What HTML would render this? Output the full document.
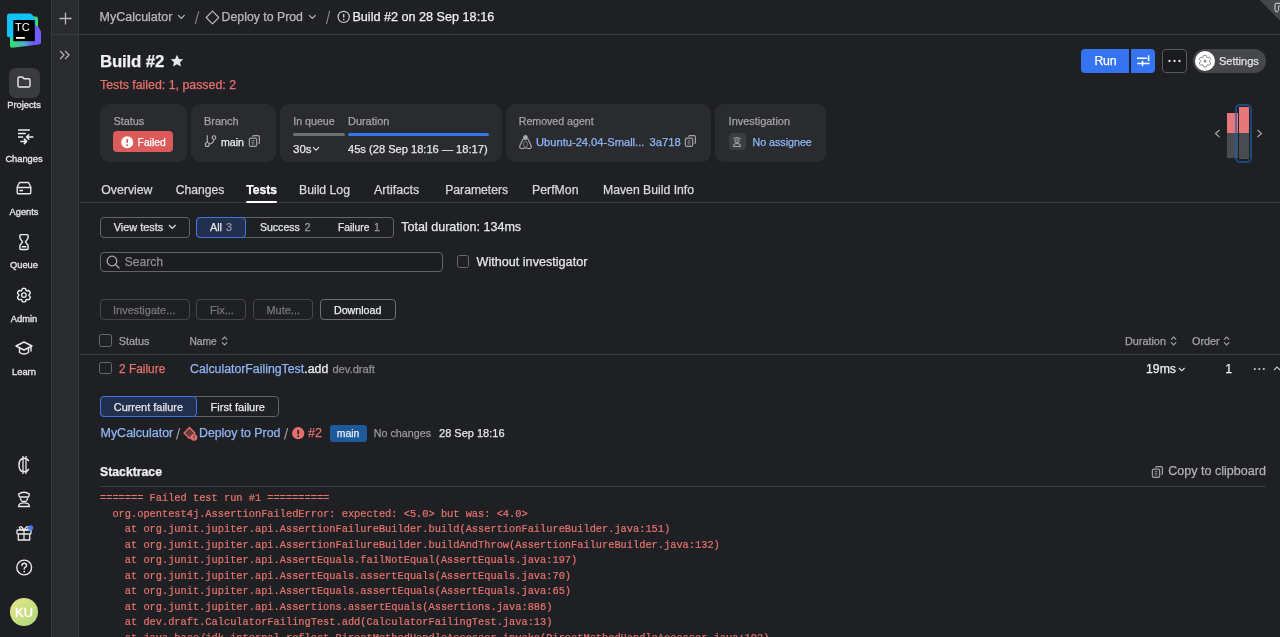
<!DOCTYPE html>
<html><head><meta charset="utf-8">
<style>
*{box-sizing:border-box;margin:0;padding:0}
html,body{width:1280px;height:637px;overflow:hidden;background:#1f2023;font-family:"Liberation Sans",sans-serif;color:#dfe1e5;position:relative}
.a{position:absolute;white-space:nowrap;line-height:1;-webkit-text-stroke:0.25px currentColor}
#root{position:absolute;left:0;top:0;width:1280px;height:637px;will-change:transform}
svg{position:absolute;overflow:visible}
.mono{font-family:"Liberation Mono",monospace;font-size:10.33px;color:#e8736e;line-height:15.5px;white-space:pre;-webkit-text-stroke:0.2px currentColor}
</style></head><body><div id="root">
<div style="position:absolute;left:0px;top:0px;width:51px;height:637px;background:#1e1f22;"></div>
<div style="position:absolute;left:51px;top:0px;width:1px;height:637px;background:#393a3e;"></div>
<div style="position:absolute;left:52px;top:0px;width:26px;height:637px;background:#2a2b2f;"></div>
<div style="position:absolute;left:78px;top:0px;width:1px;height:637px;background:#393a3e;"></div>
<div style="position:absolute;left:52px;top:34px;width:1228px;height:1px;background:#393a3e;"></div>
<svg style="left:4px;top:10px;" width="40" height="40" viewBox="0 0 40 40" fill="none">
<defs><linearGradient id="lg1" x1="6" y1="30" x2="37" y2="30" gradientUnits="userSpaceOnUse"><stop offset="0" stop-color="#2fe06a"/><stop offset="0.45" stop-color="#4bb2c9"/><stop offset="0.75" stop-color="#6a5cf5"/><stop offset="1" stop-color="#7b5cff"/></linearGradient></defs>
<path d="M6 27 L6 36 Q6 38 8.5 37.8 L35 34.6 Q37 34.3 37 32.3 L37 22 L33 14 Z" fill="url(#lg1)"/>
<path d="M26 6.5 L32 6.5 Q34 6.5 34 8.5 L34 16 L30 17 Z" fill="#3fdc63"/>
<path d="M30 13 L37 22 L37 33 L28 34 Z" fill="#6e5cfa"/>
<path d="M3 6 Q3 3.5 5.5 3.5 L26 3.5 Q27 3.5 28 4.5 L33 11 L20 26 L9 28.5 L3 26.5 Z" fill="#14c3f5"/>
<rect x="9.3" y="10" width="21.5" height="21.2" fill="#000"/>
<text x="11" y="20.8" font-family="Liberation Sans" font-size="11" fill="#fff">TC</text>
<rect x="12" y="27" width="8.8" height="1.8" fill="#fff"/>
</svg>
<div style="position:absolute;left:9px;top:67.5px;width:30.5px;height:30.5px;background:#3a3b3f;border-radius:7px;"></div>
<svg style="left:16px;top:74px;" width="16" height="16" viewBox="0 0 16 16" fill="none"><path d="M2 4.5 Q2 3 3.5 3 L6.5 3 L8 4.8 L12.5 4.8 Q14 4.8 14 6.3 L14 11.5 Q14 13 12.5 13 L3.5 13 Q2 13 2 11.5 Z" stroke="#e8e9ec" stroke-width="1.4" stroke-linejoin="round"/></svg>
<div class="a" style="left:0px;top:101.40px;font-size:9.3px;color:#e2e3e7;width:48px;text-align:center;-webkit-text-stroke:0.35px currentColor;">Projects</div>
<svg style="left:16px;top:128px;" width="18" height="17" viewBox="0 0 18 17" fill="none"><path d="M2 1.9 H13.9 M2 5.6 H9.8 M2 9 H7.1" stroke="#eceef1" stroke-width="1.5"/><path d="M16.8 9 H10.5 M12.8 6.7 L10.5 9 L12.8 11.3 M4.9 13.4 H10.6 M8.3 11.1 L10.6 13.4 L8.3 15.7" stroke="#eceef1" stroke-width="1.5" stroke-linecap="round" stroke-linejoin="round"/></svg>
<div class="a" style="left:0px;top:155.00px;font-size:9.3px;color:#e2e3e7;width:48px;text-align:center;-webkit-text-stroke:0.35px currentColor;">Changes</div>
<svg style="left:16px;top:181.4px;" width="16" height="14" viewBox="0 0 16 14" fill="none"><path d="M1.2 6 L3.5 1.5 H12.5 L14.8 6 V11.5 Q14.8 12.8 13.5 12.8 H2.5 Q1.2 12.8 1.2 11.5 Z M1.2 6.5 H14.8" stroke="#e8e9ec" stroke-width="1.4" stroke-linejoin="round"/><path d="M3.5 9.5 H7" stroke="#e8e9ec" stroke-width="1.6"/></svg>
<div class="a" style="left:0px;top:207.60px;font-size:9.3px;color:#e2e3e7;width:48px;text-align:center;-webkit-text-stroke:0.35px currentColor;">Agents</div>
<svg style="left:18px;top:233px;" width="12" height="18" viewBox="0 0 12 18" fill="none"><path d="M3 1.6 H9 Q10.1 1.6 10.1 2.7 V4.5 Q10.1 5.5 9.3 6.3 L7.4 8.8 L9.3 11.3 Q10.1 12.1 10.1 13.1 V15.4 Q10.1 16.5 9 16.5 H3 Q1.9 16.5 1.9 15.4 V13.1 Q1.9 12.1 2.7 11.3 L4.6 8.8 L2.7 6.3 Q1.9 5.5 1.9 4.5 V2.7 Q1.9 1.6 3 1.6 Z" stroke="#eceef1" stroke-width="1.4" stroke-linejoin="round"/><path d="M4.2 13.7 H7.8" stroke="#eceef1" stroke-width="1.4" stroke-linecap="round"/></svg>
<div class="a" style="left:0px;top:261.00px;font-size:9.3px;color:#e2e3e7;width:48px;text-align:center;-webkit-text-stroke:0.35px currentColor;">Queue</div>
<svg style="left:14px;top:285px;" width="20" height="20" viewBox="0 0 20 20" fill="none"><path d="M8.39 3.57 Q9.90 3.00 11.41 3.57 L12.35 5.86 L14.80 5.53 Q16.05 6.55 16.31 8.14 L14.80 10.10 L16.31 12.06 Q16.05 13.65 14.80 14.67 L12.35 14.34 L11.41 16.63 Q9.90 17.20 8.39 16.63 L7.45 14.34 L5.00 14.67 Q3.75 13.65 3.49 12.06 L5.00 10.10 L3.49 8.14 Q3.75 6.55 5.00 5.53 L7.45 5.86 Z" stroke="#eceef1" stroke-width="1.4" stroke-linejoin="round"/><circle cx="9.9" cy="10.1" r="2.3" stroke="#eceef1" stroke-width="1.3"/></svg>
<div class="a" style="left:0px;top:314.60px;font-size:9.3px;color:#e2e3e7;width:48px;text-align:center;-webkit-text-stroke:0.35px currentColor;">Admin</div>
<svg style="left:15px;top:340px;" width="18" height="16" viewBox="0 0 18 16" fill="none"><path d="M9 2 L17 6 L9 10 L1 6 Z" stroke="#e8e9ec" stroke-width="1.4" stroke-linejoin="round"/><path d="M4.5 8 V12.5 Q9 15.5 13.5 12.5 V8 M16 6.5 V11" stroke="#e8e9ec" stroke-width="1.4" stroke-linecap="round"/></svg>
<div class="a" style="left:0px;top:367.80px;font-size:9.3px;color:#e2e3e7;width:48px;text-align:center;-webkit-text-stroke:0.35px currentColor;">Learn</div>
<svg style="left:16px;top:455px;" width="16" height="20" viewBox="0 0 16 20" fill="none"><path d="M12.5 5.5 Q11 3.2 8.2 3.2 Q3 3.2 3 10 Q3 16.8 8.2 16.8 Q11 16.8 12.5 14.5" stroke="#e8e9ec" stroke-width="1.5" stroke-linecap="round"/><path d="M7 1 V19 M10 1 V19" stroke="#e8e9ec" stroke-width="1.3"/></svg>
<svg style="left:16px;top:490px;" width="16" height="18" viewBox="0 0 16 18" fill="none"><path d="M2.5 4 Q8 0.5 13.5 4 L12.5 7 H3.5 Z" stroke="#e8e9ec" stroke-width="1.3" stroke-linejoin="round"/><path d="M4.5 8 Q4.5 11.5 8 11.5 Q11.5 11.5 11.5 8" stroke="#e8e9ec" stroke-width="1.3"/><path d="M2.5 16.5 Q2.5 12.8 8 12.8 Q13.5 12.8 13.5 16.5 Z" stroke="#e8e9ec" stroke-width="1.3" stroke-linejoin="round"/></svg>
<svg style="left:16px;top:524px;" width="17" height="18" viewBox="0 0 17 18" fill="none"><rect x="1" y="6" width="14" height="4" rx="0.8" stroke="#e8e9ec" stroke-width="1.3"/><path d="M2.3 10 V16 H13.7 V10 M8 6 V16 M8 6 Q5 1 3.5 3.5 Q3 5.5 8 6 Q11 1 12.5 3.5 Q13 5.5 8 6" stroke="#e8e9ec" stroke-width="1.3" stroke-linejoin="round"/><circle cx="14.6" cy="3.8" r="2.6" fill="#3d7bf7"/></svg>
<svg style="left:16px;top:559px;" width="17" height="17" viewBox="0 0 17 17" fill="none"><circle cx="8.2" cy="8.5" r="7.4" stroke="#e8e9ec" stroke-width="1.4"/><path d="M5.9 6.6 Q5.9 4.3 8.2 4.3 Q10.5 4.3 10.5 6.4 Q10.5 7.8 8.9 8.5 Q8.2 8.9 8.2 10" stroke="#e8e9ec" stroke-width="1.4" stroke-linecap="round"/><circle cx="8.2" cy="12.6" r="0.9" fill="#e8e9ec"/></svg>
<div style="position:absolute;left:10px;top:598px;width:28px;height:28px;background:linear-gradient(135deg, #ece38e 0%, #c9df80 50%, #a9d87a 100%);border-radius:50%;"></div>
<div class="a" style="left:10px;top:606.80px;font-size:12.8px;color:#ffffff;width:28px;text-align:center;-webkit-text-stroke:0.45px #fff;">KU</div>
<svg style="left:59px;top:11.8px;" width="13" height="13" viewBox="0 0 13 13" fill="none"><path d="M6.5 0.5 V12.5 M0.5 6.5 H12.5" stroke="#b9babe" stroke-width="1.3"/></svg>
<svg style="left:59px;top:50px;" width="12" height="10" viewBox="0 0 12 10" fill="none"><path d="M1 0.8 L5 5 L1 9.2 M6 0.8 L10 5 L6 9.2" stroke="#b9babe" stroke-width="1.2" stroke-linejoin="round"/></svg>
<div class="a" style="left:99.6px;top:10.70px;font-size:12.48px;color:#b8b9bd;">MyCalculator</div>
<svg style="left:177px;top:14px;" width="9" height="6" viewBox="0 0 9 6" fill="none"><path d="M1 1.2 L4.3 4.5 L7.6 1.2" stroke="#b8b9bd" stroke-width="1.2"/></svg>
<svg style="left:194px;top:10px;" width="6" height="15" viewBox="0 0 6 15" fill="none"><path d="M4.6 1.8 L1.4 13.4" stroke="#8a8b8f" stroke-width="1.1" stroke-linecap="round"/></svg>
<svg style="left:205px;top:10px;" width="15" height="15" viewBox="0 0 15 15" fill="none"><path d="M7.5 1.2 L13.8 7.5 L7.5 13.8 L1.2 7.5 Z" stroke="#b8b9bd" stroke-width="1.2" stroke-linejoin="round"/></svg>
<div class="a" style="left:221.6px;top:10.70px;font-size:12.31px;color:#b8b9bd;">Deploy to Prod</div>
<svg style="left:308px;top:14px;" width="9" height="6" viewBox="0 0 9 6" fill="none"><path d="M1 1.2 L4.3 4.5 L7.6 1.2" stroke="#b8b9bd" stroke-width="1.2"/></svg>
<svg style="left:325px;top:10px;" width="6" height="15" viewBox="0 0 6 15" fill="none"><path d="M4.6 1.2 L1.5 13.6" stroke="#8a8b8f" stroke-width="1.1" stroke-linecap="round"/></svg>
<svg style="left:337px;top:10px;" width="14" height="14" viewBox="0 0 14 14" fill="none"><circle cx="6.7" cy="6.9" r="5.6" stroke="#c9cace" stroke-width="1.2"/><path d="M6.7 3.9 V7.6" stroke="#c9cace" stroke-width="1.4"/><circle cx="6.7" cy="9.6" r="0.8" fill="#c9cace"/></svg>
<div class="a" style="left:352.4px;top:10.80px;font-size:12.63px;color:#eeeff2;">Build #2 on 28 Sep 18:16</div>
<svg style="left:1259px;top:0px;" width="21" height="21" viewBox="0 0 21 21" fill="none"><path d="M0.8 0 H21 V20.6 Z" fill="#46474b"/><path d="M21 3.4 H17.8 Q16 3.4 16 5.2 V9.8 Q16 11.6 17.8 11.6 H19" stroke="#bfc0c4" stroke-width="1.2"/><path d="M19.2 6 H21 M19.5 6 V11" stroke="#bfc0c4" stroke-width="1"/></svg>
<div class="a" style="left:100px;top:54.00px;font-size:16.8px;color:#f0f1f4;font-weight:bold;letter-spacing:-0.15px;">Build #2</div>
<svg style="left:170px;top:54px;" width="14" height="13" viewBox="0 0 14 13" fill="none"><path d="M7 0.8 L8.9 4.9 L13.3 5.3 L10 8.3 L11 12.6 L7 10.3 L3 12.6 L4 8.3 L0.7 5.3 L5.1 4.9 Z" fill="#e6e7ea"/></svg>
<div class="a" style="left:100px;top:79.00px;font-size:12.36px;color:#e4716d;">Tests failed: 1, passed: 2</div>
<div style="position:absolute;left:1081px;top:49px;width:48px;height:24px;background:#3574f0;border-radius:4px 0 0 4px;"></div>
<div style="position:absolute;left:1131px;top:49px;width:24px;height:24px;background:#3574f0;border-radius:0 4px 4px 0;"></div>
<div class="a" style="left:1094.4px;top:54.90px;font-size:12.3px;color:#ffffff;letter-spacing:-0.2px;">Run</div>
<svg style="left:1135px;top:53px;" width="16" height="16" viewBox="0 0 16 16" fill="none"><path d="M2 5.2 H11.8 M2.2 10.4 H14.6" stroke="#fff" stroke-width="1.5"/><path d="M13.6 3 V7.4 M7.5 8.2 V12.6" stroke="#fff" stroke-width="1.6" stroke-linecap="round"/></svg>
<div style="position:absolute;left:1162px;top:49px;width:25px;height:24px;background:#1a1b1e;border:1px solid #5a5b60;border-radius:4px;"></div>
<svg style="left:1167px;top:59px;" width="15" height="4" viewBox="0 0 15 4" fill="none"><circle cx="2.5" cy="2" r="1.15" fill="#e8e9ec"/><circle cx="7.5" cy="2" r="1.15" fill="#e8e9ec"/><circle cx="12.5" cy="2" r="1.15" fill="#e8e9ec"/></svg>
<div style="position:absolute;left:1193px;top:49px;width:73px;height:24px;background:#46474c;border-radius:12px;"></div>
<div style="position:absolute;left:1195px;top:51px;width:20px;height:20px;background:#ffffff;border-radius:50%;"></div>
<svg style="left:1195px;top:50.5px;" width="20" height="20" viewBox="0 0 20 20" fill="none"><path d="M8.67 4.45 Q10.00 3.95 11.33 4.45 L12.10 6.56 L14.31 6.18 Q15.42 7.07 15.64 8.48 L14.20 10.20 L15.64 11.92 Q15.42 13.33 14.31 14.22 L12.10 13.84 L11.33 15.95 Q10.00 16.45 8.67 15.95 L7.90 13.84 L5.69 14.22 Q4.58 13.33 4.36 11.92 L5.80 10.20 L4.36 8.48 Q4.58 7.07 5.69 6.18 L7.90 6.56 Z" stroke="#8c8d92" stroke-width="1.0" stroke-linejoin="round"/><circle cx="10" cy="10.2" r="1.4" fill="#8a8b90"/></svg>
<div class="a" style="left:1219px;top:55.90px;font-size:11.04px;color:#e1e2e6;">Settings</div>
<svg style="left:1214px;top:129px;" width="7" height="9" viewBox="0 0 7 9" fill="none"><path d="M5.5 1 L1.5 4.5 L5.5 8" stroke="#a9aaae" stroke-width="1.1"/></svg>
<svg style="left:1256px;top:129px;" width="7" height="9" viewBox="0 0 7 9" fill="none"><path d="M1.5 1 L5.5 4.5 L1.5 8" stroke="#a9aaae" stroke-width="1.1"/></svg>
<div style="position:absolute;left:1227px;top:113px;width:11px;height:20px;background:#e8777a;"></div>
<div style="position:absolute;left:1227px;top:133px;width:11px;height:25px;background:#4a4b50;"></div>
<div style="position:absolute;left:1239px;top:107px;width:10px;height:26px;background:#e8777a;"></div>
<div style="position:absolute;left:1239px;top:133px;width:10px;height:26px;background:#4a4b50;"></div>
<div style="position:absolute;left:1235.3px;top:103.8px;width:17.2px;height:59px;background:transparent;border:2.6px solid rgba(28,95,170,0.68);border-radius:5px;"></div>
<div style="position:absolute;left:100px;top:104px;width:87px;height:58px;background:#2a2b2f;border-radius:9px;"></div>
<div style="position:absolute;left:191px;top:104px;width:85px;height:58px;background:#2a2b2f;border-radius:9px;"></div>
<div style="position:absolute;left:280px;top:104px;width:222px;height:58px;background:#2a2b2f;border-radius:9px;"></div>
<div style="position:absolute;left:506px;top:104px;width:205px;height:58px;background:#2a2b2f;border-radius:9px;"></div>
<div style="position:absolute;left:715px;top:104px;width:111px;height:58px;background:#2a2b2f;border-radius:9px;"></div>
<div class="a" style="left:113.4px;top:116.00px;font-size:10.9px;color:#a3a4a9;">Status</div>
<div style="position:absolute;left:113px;top:131px;width:60px;height:21px;background:#db5b5b;border-radius:4px;"></div>
<svg style="left:121px;top:135.5px;" width="13" height="13" viewBox="0 0 13 13" fill="none"><circle cx="6.2" cy="6.2" r="6" fill="#fff"/><path d="M6.2 3 V7" stroke="#db5b5b" stroke-width="1.7"/><circle cx="6.2" cy="9.3" r="0.95" fill="#db5b5b"/></svg>
<div class="a" style="left:137.6px;top:137.50px;font-size:10.3px;color:#ffffff;">Failed</div>
<div class="a" style="left:204px;top:116.00px;font-size:10.95px;color:#a3a4a9;">Branch</div>
<svg style="left:204px;top:134px;" width="14" height="14" viewBox="0 0 14 14" fill="none"><circle cx="3.25" cy="10.5" r="2" stroke="#b5b6ba" stroke-width="1.1"/><circle cx="10" cy="3.5" r="1.8" stroke="#b5b6ba" stroke-width="1.1"/><path d="M3.25 1.3 V8.5 M10 5.3 Q10 9.4 5.1 10" stroke="#b5b6ba" stroke-width="1.1"/></svg>
<div class="a" style="left:221px;top:136.50px;font-size:10.61px;color:#eceef1;">main</div>
<svg style="left:248px;top:134px;" width="14" height="15" viewBox="0 0 14 15" fill="none"><rect x="1.35" y="4.1" width="7.3" height="8.3" rx="1.7" stroke="#a3a4a9" stroke-width="1.2"/><path d="M4.5 2.8 Q4.6 1.6 5.9 1.6 H9.8 Q11.4 1.6 11.4 3.2 V8.2 Q11.4 9.5 10.4 9.6" stroke="#a3a4a9" stroke-width="1.2"/><path d="M3.6 6.6 H6.4 M3.6 8.3 H6.4 M3.6 10 H6.4" stroke="#a3a4a9" stroke-width="1" opacity="0.8"/></svg>
<div class="a" style="left:293.2px;top:116.00px;font-size:10.66px;color:#a3a4a9;">In queue</div>
<div class="a" style="left:348px;top:116.00px;font-size:10.95px;color:#a3a4a9;">Duration</div>
<div style="position:absolute;left:293px;top:132.8px;width:52px;height:3.6px;background:#6f7075;border-radius:2px;"></div>
<div style="position:absolute;left:348px;top:132.8px;width:140.5px;height:3.6px;background:#3574f0;border-radius:2px;"></div>
<div class="a" style="left:293px;top:143.50px;font-size:11.54px;color:#e6e7ea;">30s</div>
<svg style="left:312px;top:146px;" width="8" height="6" viewBox="0 0 8 6" fill="none"><path d="M1 1.2 L4 4.2 L7 1.2" stroke="#e6e7ea" stroke-width="1.1"/></svg>
<div class="a" style="left:348px;top:143.50px;font-size:11.11px;color:#e6e7ea;">45s (28 Sep 18:16 — 18:17)</div>
<div class="a" style="left:518.75px;top:116.00px;font-size:10.62px;color:#a3a4a9;">Removed agent</div>
<svg style="left:518px;top:134px;" width="15" height="16" viewBox="0 0 15 16" fill="none"><path d="M5.3 4.5 Q3.6 8 2.2 11 Q1 13.6 2.6 14.3 Q4 14.8 5.6 14.3 Q7.5 13.6 9.4 14.3 Q11 14.8 12.4 14.3 Q14 13.6 12.8 11 Q11.4 8 9.7 4.5" stroke="#a9aaae" stroke-width="1.15" stroke-linejoin="round"/><ellipse cx="7.5" cy="3.5" rx="2.3" ry="2.6" fill="#a9aaae"/><ellipse cx="7.5" cy="10.3" rx="2" ry="2.8" stroke="#8d8e93" stroke-width="0.8"/></svg>
<div class="a" style="left:536px;top:136.50px;font-size:11.15px;color:#90b6f7;">Ubuntu-24.04-Small...</div>
<div class="a" style="left:649.5px;top:136.50px;font-size:11.26px;color:#90b6f7;">3a718</div>
<svg style="left:684px;top:134px;" width="14" height="15" viewBox="0 0 14 15" fill="none"><rect x="1.35" y="4.1" width="7.3" height="8.3" rx="1.7" stroke="#a3a4a9" stroke-width="1.2"/><path d="M4.5 2.8 Q4.6 1.6 5.9 1.6 H9.8 Q11.4 1.6 11.4 3.2 V8.2 Q11.4 9.5 10.4 9.6" stroke="#a3a4a9" stroke-width="1.2"/><path d="M3.6 6.6 H6.4 M3.6 8.3 H6.4 M3.6 10 H6.4" stroke="#a3a4a9" stroke-width="1" opacity="0.8"/></svg>
<div class="a" style="left:728.6px;top:116.00px;font-size:10.94px;color:#a3a4a9;">Investigation</div>
<div style="position:absolute;left:728.6px;top:133px;width:17px;height:17px;background:#3c3d42;border-radius:4px;"></div>
<svg style="left:731px;top:135px;" width="12" height="13" viewBox="0 0 12 13" fill="none"><path d="M2.5 4 Q6 1.2 9.5 4 M3.5 5.5 Q6 4 8.5 5.5" stroke="#a3a4a9" stroke-width="1.1"/><path d="M3.5 6.5 Q6 8 8.5 6.5 M2.5 11.5 Q2.5 8.5 6 8.5 Q9.5 8.5 9.5 11.5 Z" stroke="#a3a4a9" stroke-width="1.1" stroke-linejoin="round"/></svg>
<div class="a" style="left:752.5px;top:136.50px;font-size:10.67px;color:#90b6f7;">No assignee</div>
<div class="a" style="left:101.25px;top:183.60px;font-size:12.3px;color:#d8d9dd;">Overview</div>
<div class="a" style="left:175.75px;top:183.60px;font-size:12.12px;color:#d8d9dd;">Changes</div>
<div class="a" style="left:246.25px;top:183.60px;font-size:12.12px;color:#ffffff;font-weight:bold;">Tests</div>
<div class="a" style="left:299px;top:183.60px;font-size:12.23px;color:#d8d9dd;">Build Log</div>
<div class="a" style="left:374px;top:183.60px;font-size:12.5px;color:#d8d9dd;">Artifacts</div>
<div class="a" style="left:445.2px;top:183.60px;font-size:12.19px;color:#d8d9dd;">Parameters</div>
<div class="a" style="left:532px;top:183.60px;font-size:12.3px;color:#d8d9dd;">PerfMon</div>
<div class="a" style="left:603px;top:183.60px;font-size:12.22px;color:#d8d9dd;">Maven Build Info</div>
<div style="position:absolute;left:80px;top:202px;width:1200px;height:1px;background:#393a3e;"></div>
<div style="position:absolute;left:246px;top:200.5px;width:31px;height:2.5px;background:#ffffff;border-radius:1px;"></div>
<div style="position:absolute;left:100px;top:217px;width:90px;height:21px;background:transparent;border:1px solid #636469;border-radius:4px;"></div>
<div class="a" style="left:113.75px;top:222.10px;font-size:10.91px;color:#e1e2e6;">View tests</div>
<svg style="left:168px;top:224px;" width="9" height="6" viewBox="0 0 9 6" fill="none"><path d="M1 1 L4.3 4.3 L7.6 1" stroke="#e1e2e6" stroke-width="1.2"/></svg>
<div style="position:absolute;left:196px;top:217px;width:198px;height:21px;background:transparent;border:1px solid #636469;border-radius:4px;"></div>
<div style="position:absolute;left:196px;top:217px;width:50px;height:21px;background:#22304d;border:1.5px solid #3c76e8;border-radius:4px;"></div>
<div class="a" style="left:210px;top:222.10px;font-size:10.8px;color:#e6e7ea;">All</div>
<div class="a" style="left:226px;top:222.10px;font-size:10.8px;color:#9a9ba0;">3</div>
<div class="a" style="left:260px;top:222.10px;font-size:10.53px;color:#e6e7ea;">Success</div>
<div class="a" style="left:304.4px;top:222.10px;font-size:10.8px;color:#9a9ba0;">2</div>
<div class="a" style="left:338px;top:223.10px;font-size:10.27px;color:#e6e7ea;">Failure</div>
<div class="a" style="left:374px;top:222.10px;font-size:10.8px;color:#9a9ba0;">1</div>
<div class="a" style="left:401.2px;top:220.90px;font-size:12.55px;color:#e6e7ea;">Total duration: 134ms</div>
<div style="position:absolute;left:100px;top:251.5px;width:343px;height:20.5px;background:#1c1d20;border:1px solid #636469;border-radius:4px;"></div>
<svg style="left:106px;top:255px;" width="14" height="14" viewBox="0 0 14 14" fill="none"><circle cx="6" cy="6" r="4.8" stroke="#a9aaae" stroke-width="1.3"/><path d="M9.5 9.5 L13 13" stroke="#a9aaae" stroke-width="1.3" stroke-linecap="round"/></svg>
<div class="a" style="left:124.7px;top:256.10px;font-size:12.09px;color:#8c8d92;">Search</div>
<div style="position:absolute;left:457px;top:255px;width:12px;height:12.7px;background:transparent;border:1.2px solid #68696e;border-radius:2.5px;"></div>
<div class="a" style="left:476.5px;top:256.10px;font-size:12.64px;color:#e6e7ea;">Without investigator</div>
<div style="position:absolute;left:100px;top:299px;width:89.5px;height:21px;background:transparent;border:1px solid #45464b;border-radius:4px;"></div>
<div class="a" style="left:113px;top:305.30px;font-size:11.01px;color:#76777c;">Investigate...</div>
<div style="position:absolute;left:196px;top:299px;width:49.5px;height:21px;background:transparent;border:1px solid #45464b;border-radius:4px;"></div>
<div class="a" style="left:210px;top:305.30px;font-size:11px;color:#76777c;">Fix...</div>
<div style="position:absolute;left:252.5px;top:299px;width:60.5px;height:21px;background:transparent;border:1px solid #45464b;border-radius:4px;"></div>
<div class="a" style="left:266.4px;top:305.30px;font-size:11px;color:#76777c;">Mute...</div>
<div style="position:absolute;left:320px;top:299px;width:75.5px;height:21px;background:transparent;border:1px solid #6d6e73;border-radius:4px;"></div>
<div class="a" style="left:334px;top:305.30px;font-size:10.66px;color:#eceef1;">Download</div>
<div style="position:absolute;left:99px;top:334.3px;width:13px;height:12.7px;background:transparent;border:1.2px solid #68696e;border-radius:2.5px;"></div>
<div class="a" style="left:118.7px;top:335.60px;font-size:10.86px;color:#a3a4a9;">Status</div>
<div class="a" style="left:189.4px;top:336.60px;font-size:10.27px;color:#a3a4a9;">Name</div>
<svg style="left:221px;top:336px;" width="8" height="10" viewBox="0 0 8 10" fill="none"><path d="M1 3.6 L3.6 1 L6.2 3.6 M1 6.4 L3.6 9 L6.2 6.4" stroke="#a3a4a9" stroke-width="1.1"/></svg>
<div class="a" style="left:1124.9px;top:335.60px;font-size:10.87px;color:#a3a4a9;">Duration</div>
<svg style="left:1169.5px;top:336px;" width="8" height="10" viewBox="0 0 8 10" fill="none"><path d="M1 3.6 L3.6 1 L6.2 3.6 M1 6.4 L3.6 9 L6.2 6.4" stroke="#a3a4a9" stroke-width="1.1"/></svg>
<div class="a" style="left:1192px;top:335.60px;font-size:10.8px;color:#a3a4a9;">Order</div>
<svg style="left:1223px;top:336px;" width="8" height="10" viewBox="0 0 8 10" fill="none"><path d="M1 3.6 L3.6 1 L6.2 3.6 M1 6.4 L3.6 9 L6.2 6.4" stroke="#a3a4a9" stroke-width="1.1"/></svg>
<div style="position:absolute;left:80px;top:354px;width:1200px;height:1px;background:#393a3e;"></div>
<div style="position:absolute;left:99px;top:361.8px;width:13px;height:12.7px;background:transparent;border:1.2px solid #68696e;border-radius:2.5px;"></div>
<div class="a" style="left:119px;top:363.80px;font-size:11.9px;color:#e4716d;">2 Failure</div>
<div class="a" style="left:190px;top:362.80px;font-size:12.31px;color:#90b6f7;">CalculatorFailingTest</div>
<div class="a" style="left:304.3px;top:362.80px;font-size:12.31px;color:#eceef1;">.add</div>
<div class="a" style="left:332.4px;top:363.80px;font-size:11.16px;color:#909196;">dev.draft</div>
<div class="a" style="left:1146px;top:362.80px;font-size:12.27px;color:#eceef1;">19ms</div>
<svg style="left:1177.8px;top:367.2px;" width="8" height="6" viewBox="0 0 8 6" fill="none"><path d="M1 1 L3.8 3.8 L6.6 1" stroke="#eceef1" stroke-width="1.1"/></svg>
<div class="a" style="left:1225.3px;top:362.80px;font-size:12.3px;color:#eceef1;">1</div>
<svg style="left:1253px;top:367px;" width="13" height="4" viewBox="0 0 13 4" fill="none"><circle cx="1.8" cy="2" r="1.1" fill="#c8c9cd"/><circle cx="6.3" cy="2" r="1.1" fill="#c8c9cd"/><circle cx="10.8" cy="2" r="1.1" fill="#c8c9cd"/></svg>
<svg style="left:1273px;top:365px;" width="8" height="6" viewBox="0 0 8 6" fill="none"><path d="M1 5 L4 2 L7 5" stroke="#c8c9cd" stroke-width="1.1"/></svg>
<div style="position:absolute;left:100px;top:396.2px;width:179px;height:21px;background:transparent;border:1px solid #636469;border-radius:4px;"></div>
<div style="position:absolute;left:100px;top:396.2px;width:97px;height:21px;background:#22304d;border:1.5px solid #3c76e8;border-radius:4px;"></div>
<div class="a" style="left:113.75px;top:401.80px;font-size:10.95px;color:#e6e7ea;">Current failure</div>
<div class="a" style="left:210.6px;top:401.80px;font-size:11px;color:#e6e7ea;">First failure</div>
<div class="a" style="left:100.5px;top:426.60px;font-size:12.48px;color:#90b6f7;">MyCalculator</div>
<svg style="left:175px;top:427px;" width="6" height="14" viewBox="0 0 6 14" fill="none"><path d="M4.5 1.6 L1.6 12" stroke="#a3a4a9" stroke-width="1.1" stroke-linecap="round"/></svg>
<svg style="left:183px;top:426px;" width="15" height="15" viewBox="0 0 15 15" fill="none"><path d="M6.5 1.5 L12 7 L6.5 12.5 L1 7 Z" fill="#6a3a3c" stroke="#e4716d" stroke-width="1.3" stroke-linejoin="round"/><circle cx="11" cy="11.5" r="3.3" fill="#e4716d"/><path d="M11 9.7 V11.8" stroke="#1f2023" stroke-width="1"/><circle cx="11" cy="13" r="0.5" fill="#1f2023"/></svg>
<div class="a" style="left:199px;top:426.60px;font-size:12.31px;color:#90b6f7;">Deploy to Prod</div>
<svg style="left:283px;top:427px;" width="6" height="14" viewBox="0 0 6 14" fill="none"><path d="M4.5 1.6 L1.6 12" stroke="#a3a4a9" stroke-width="1.1" stroke-linecap="round"/></svg>
<svg style="left:291.6px;top:426.5px;" width="13" height="13" viewBox="0 0 13 13" fill="none"><circle cx="6.2" cy="6.2" r="6.1" fill="#e4716d"/><path d="M6.2 3 V7" stroke="#1f2023" stroke-width="1.7"/><circle cx="6.2" cy="9.3" r="0.95" fill="#1f2023"/></svg>
<div class="a" style="left:308px;top:426.60px;font-size:12.59px;color:#e4716d;">#2</div>
<div style="position:absolute;left:329.5px;top:424.5px;width:37px;height:17px;background:#1c5a9c;border-radius:3px;"></div>
<div class="a" style="left:336.8px;top:428.90px;font-size:10.43px;color:#e6eefa;">main</div>
<div class="a" style="left:373.8px;top:427.90px;font-size:10.72px;color:#9a9ba0;">No changes</div>
<div class="a" style="left:439px;top:427.90px;font-size:11.03px;color:#e6e7ea;">28 Sep 18:16</div>
<div class="a" style="left:100px;top:465.60px;font-size:12.26px;color:#f0f1f4;font-weight:bold;">Stacktrace</div>
<svg style="left:1151px;top:464.5px;" width="14" height="15" viewBox="0 0 14 15" fill="none"><rect x="1.35" y="4.1" width="7.3" height="8.3" rx="1.7" stroke="#a3a4a9" stroke-width="1.2"/><path d="M4.5 2.8 Q4.6 1.6 5.9 1.6 H9.8 Q11.4 1.6 11.4 3.2 V8.2 Q11.4 9.5 10.4 9.6" stroke="#a3a4a9" stroke-width="1.2"/><path d="M3.6 6.6 H6.4 M3.6 8.3 H6.4 M3.6 10 H6.4" stroke="#a3a4a9" stroke-width="1" opacity="0.8"/></svg>
<div class="a" style="left:1168.2px;top:465.20px;font-size:12.57px;color:#b0b1b5;">Copy to clipboard</div>
<div style="position:absolute;left:100px;top:486px;width:1166px;height:1px;background:#393a3e;"></div>
<div class="mono" style="position:absolute;left:100px;top:491px">======= Failed test run #1 ==========
  org.opentest4j.AssertionFailedError: expected: &lt;5.0&gt; but was: &lt;4.0&gt;
    at org.junit.jupiter.api.AssertionFailureBuilder.build(AssertionFailureBuilder.java:151)
    at org.junit.jupiter.api.AssertionFailureBuilder.buildAndThrow(AssertionFailureBuilder.java:132)
    at org.junit.jupiter.api.AssertEquals.failNotEqual(AssertEquals.java:197)
    at org.junit.jupiter.api.AssertEquals.assertEquals(AssertEquals.java:70)
    at org.junit.jupiter.api.AssertEquals.assertEquals(AssertEquals.java:65)
    at org.junit.jupiter.api.Assertions.assertEquals(Assertions.java:886)
    at dev.draft.CalculatorFailingTest.add(CalculatorFailingTest.java:13)
    at java.base/jdk.internal.reflect.DirectMethodHandleAccessor.invoke(DirectMethodHandleAccessor.java:103)</div>
</div></body></html>
